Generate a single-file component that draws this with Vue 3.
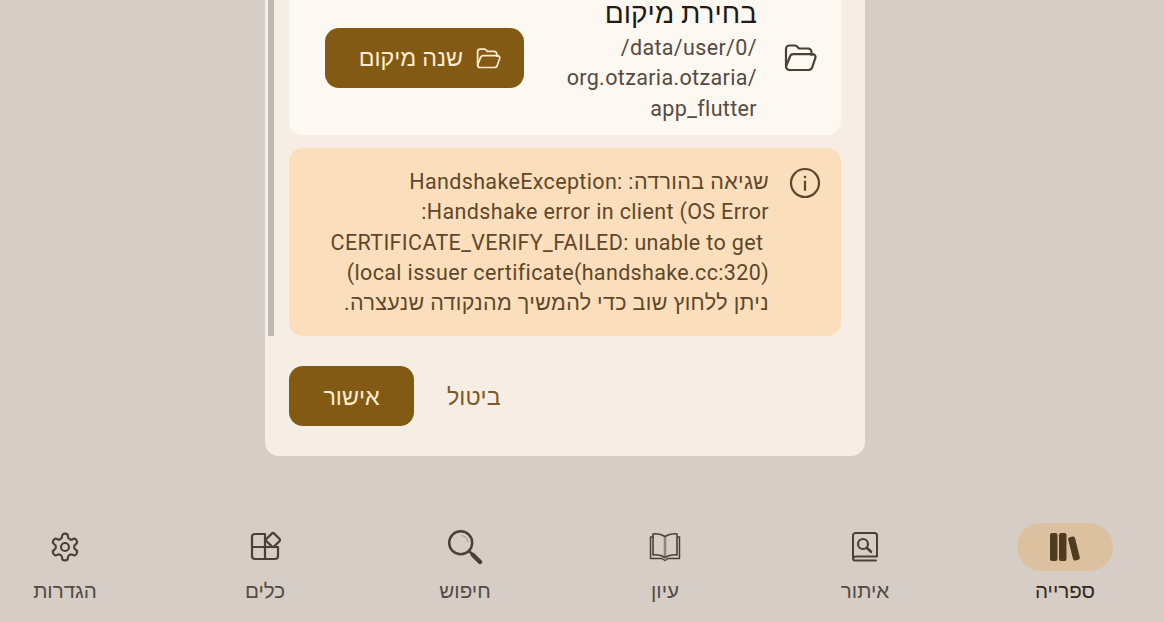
<script setup>
const navItems = [
  { label: 'ספרייה', icon: 'library', active: true },
  { label: 'איתור', icon: 'find' },
  { label: 'עיון', icon: 'book' },
  { label: 'חיפוש', icon: 'search' },
  { label: 'כלים', icon: 'tools' },
  { label: 'הגדרות', icon: 'settings' },
];
const errorText = 'שגיאה בהורדה: HandshakeException: Handshake error in client (OS Error:\n CERTIFICATE_VERIFY_FAILED: unable to get local issuer certificate(handshake.cc:320))\nניתן ללחוץ שוב כדי להמשיך מהנקודה שנעצרה.';
const pathLines = ['/data/user/0/', 'org.otzaria.otzaria/', 'app_flutter'];
</script>

<template>
  <div class="page" dir="rtl">
    <main class="main">
      <section class="dialog">
        <div class="scrollbar"></div>
        <div class="location-card">
          <svg class="folder-icon" width="33" height="28" viewBox="0 0 33 28" fill="none" stroke="currentColor" stroke-width="2.2" stroke-linejoin="round" stroke-linecap="round">
            <path d="M2 22V5a3.5 3.5 0 0 1 3.500-3.500h5.300a3 3 0 0 1 2 .8l2.200 2.200H24a3.500 3.500 0 0 1 3.500 3.500v3" />
            <path d="M2 22.500 6 12.500a3.500 3.500 0 0 1 3.200-2.400H28.500a3 3 0 0 1 2.800 4L28.300 23a4 4 0 0 1-3.800 3H5.500A3.500 3.500 0 0 1 2 22.500z" />
          </svg>
          <div class="location-text">
            <h3 class="location-title">בחירת מיקום</h3>
            <div v-for="line in pathLines" :key="line" class="location-path" dir="ltr">{{ line }}</div>
          </div>
          <button class="primary-btn change-btn">
            <svg width="25" height="21" viewBox="0 0 33 28" fill="none" stroke="currentColor" stroke-width="2.300" stroke-linejoin="round" stroke-linecap="round">
              <path d="M2 22V5a3.5 3.5 0 0 1 3.500-3.500h5.300a3 3 0 0 1 2 .8l2.200 2.200H24a3.500 3.500 0 0 1 3.500 3.500v3" />
              <path d="M2 22.500 6 12.500a3.500 3.500 0 0 1 3.200-2.400H28.500a3 3 0 0 1 2.800 4L28.300 23a4 4 0 0 1-3.800 3H5.500A3.500 3.500 0 0 1 2 22.500z" />
            </svg>
            <span>שנה מיקום</span>
          </button>
        </div>
        <div class="error-box">
          <svg class="info-icon" width="32" height="32" viewBox="0 0 32 32" fill="none" stroke="currentColor" stroke-width="2.200" stroke-linecap="round">
            <circle cx="16" cy="16" r="14" />
            <path d="M16 14.500v8.500" />
            <circle cx="16" cy="10" r="1.300" fill="currentColor" stroke="none" />
          </svg>
          <p class="error-text">{{ errorText }}</p>
        </div>
        <div class="actions">
          <button class="text-btn">ביטול</button>
          <button class="primary-btn ok-btn">אישור</button>
        </div>
      </section>
    </main>
    <nav class="nav">
      <div v-for="item in navItems" :key="item.label" :class="['nav-item', { active: item.active }]">
        <div class="nav-pill">
          <svg v-if="item.icon === 'library'" width="34" height="30" viewBox="0 0 34 30" fill="currentColor">
            <rect x="2" y="1" width="7.500" height="28" rx="2" />
            <rect x="11" y="1" width="7.500" height="28" rx="2" />
            <rect x="22.500" y="4.500" width="7" height="24" rx="2" transform="rotate(-14 26 16.500)" />
          </svg>
          <svg v-else-if="item.icon === 'find'" width="30" height="32" viewBox="0 0 30 32" fill="none" stroke="currentColor" stroke-width="2" stroke-linecap="round" stroke-linejoin="round">
            <path d="M3 26V4.500A2.500 2.500 0 0 1 5.500 2H24.500A2.500 2.500 0 0 1 27 4.500V25.500H6.500A3.500 2 0 0 0 3 27.500 2 2 0 0 0 5 29.500H26" />
            <circle cx="13" cy="13" r="5" stroke-width="2.200" />
            <path d="m17 17 4 3.800" stroke-width="2.600" />
          </svg>
          <svg v-else-if="item.icon === 'book'" width="32" height="30" viewBox="0 0 32 30" fill="none" stroke="currentColor" stroke-width="1.600" stroke-linejoin="round">
            <path d="M16 4.500C13 2.500 8 1.500 4 2V23C8 22.500 13 23.500 16 25.500 19 23.500 24 22.500 28 23V2C24 1.500 19 2.500 16 4.500z" />
            <path d="M16 4.500V25.500" stroke-width="2.600" opacity=".5" />
            <path d="M4 5H1.500V26.500H13L16 28.500 19 26.500H30.500V5H28" stroke-width="1.500" />
          </svg>
          <svg v-else-if="item.icon === 'search'" width="36" height="36" viewBox="0 0 36 36" fill="none" stroke="currentColor" stroke-linecap="round">
            <circle cx="13.700" cy="13.700" r="11.500" stroke-width="2.500" />
            <path d="M15 6.500a7.500 7.500 0 0 1 6 6" stroke-width="1" opacity=".4" />
            <path d="m22.500 22.500 3.500 3.500" stroke-width="2.500" />
            <path d="m26 26 7 7" stroke-width="4.500" />
          </svg>
          <svg v-else-if="item.icon === 'tools'" width="32" height="32" viewBox="0 0 32 32" fill="none" stroke="currentColor" stroke-width="2.200" stroke-linejoin="round">
            <path d="M3 16V6A3 3 0 0 1 6 3H16V16z" />
            <path d="M3 16H29V25A3 3 0 0 1 26 28H6A3 3 0 0 1 3 25z" />
            <path d="M16 16V28" />
            <path d="M25.200 2.600 30.400 7.800a1.700 1.700 0 0 1 0 2.400L25.200 15.400a1.700 1.700 0 0 1-2.400 0L17.600 10.200a1.700 1.700 0 0 1 0-2.400L22.800 2.600a1.700 1.700 0 0 1 2.400 0z" />
          </svg>
          <svg v-else width="32" height="32" viewBox="0 0 24 24" fill="none" stroke="currentColor" stroke-width="1.600" stroke-linecap="round" stroke-linejoin="round">
            <path d="M12.220 2h-.44a2 2 0 0 0-2 2v.18a2 2 0 0 1-1 1.730l-.43.25a2 2 0 0 1-2 0l-.15-.08a2 2 0 0 0-2.730.73l-.22.38a2 2 0 0 0 .73 2.730l.15.1a2 2 0 0 1 1 1.720v.51a2 2 0 0 1-1 1.740l-.15.09a2 2 0 0 0-.73 2.730l.22.38a2 2 0 0 0 2.730.73l.15-.08a2 2 0 0 1 2 0l.43.25a2 2 0 0 1 1 1.730V20a2 2 0 0 0 2 2h.44a2 2 0 0 0 2-2v-.18a2 2 0 0 1 1-1.730l.43-.25a2 2 0 0 1 2 0l.15.08a2 2 0 0 0 2.730-.73l.22-.39a2 2 0 0 0-.73-2.730l-.15-.08a2 2 0 0 1-1-1.740v-.5a2 2 0 0 1 1-1.740l.15-.09a2 2 0 0 0 .73-2.730l-.22-.38a2 2 0 0 0-2.730-.73l-.15.08a2 2 0 0 1-2 0l-.43-.25a2 2 0 0 1-1-1.730V4a2 2 0 0 0-2-2z" />
            <circle cx="12" cy="12" r="3" />
          </svg>
        </div>
        <span class="nav-label">{{ item.label }}</span>
      </div>
    </nav>
  </div>
</template>

<style>
html, body {
  margin: 0;
  background: #d6cdc7;
}
</style>

<style scoped>
.page {
  width: 1164px;
  height: 622px;
  overflow: hidden;
  display: flex;
  flex-direction: column;
  align-items: flex-end;
  background: #d6cdc7;
  font-family: Roboto, "Noto Sans", sans-serif;
}
.main {
  height: 523px;
  width: 1130px;
  flex: none;
  display: flex;
  flex-direction: column;
  justify-content: flex-end;
  align-items: center;
  padding-bottom: 67px;
  box-sizing: border-box;
  overflow: hidden;
}
.dialog {
  position: relative;
  flex: none;
  width: 600px;
  box-sizing: border-box;
  padding: 0 24px 30px;
  background: #f6eee4;
  border-radius: 0 0 14px 14px;
  display: flex;
  flex-direction: column;
}
.scrollbar {
  position: absolute;
  left: 3px;
  top: 0;
  bottom: 120px;
  width: 6px;
  background: #bdbab6;
}
.location-card {
  display: flex;
  align-items: center;
  background: #fef8f3;
  border-radius: 0 0 14px 14px;
  padding: 0 24px 11px 36px;
}
.folder-icon {
  flex: none;
  color: #4a4136;
  margin-left: 27px;
}
.location-text {
  flex: 1;
  min-width: 0;
  padding-top: 4px;
}
.location-title {
  margin: 0 0 1px;
  font-size: 28px;
  line-height: 36px;
  font-weight: 400;
  color: #1f1b16;
}
.location-path {
  font-size: 21.500px;
  letter-spacing: 0.350px;
  line-height: 30.300px;
  color: #544b42;
  text-align: right;
}
.primary-btn {
  border: none;
  background: #825a14;
  color: #fdeccf;
  font-family: inherit;
  font-size: 23.300px;
  border-radius: 14px;
  height: 60px;
  display: flex;
  align-items: center;
  justify-content: center;
  flex: none;
}
.change-btn {
  width: 199px;
  gap: 13px;
  justify-content: flex-start;
  padding: 0 23px 0 0;
}
.error-box {
  margin-top: 13px;
  height: 188px;
  box-sizing: border-box;
  background: #fbdfbd;
  border-radius: 14px;
  display: flex;
  align-items: flex-start;
  padding: 19px 20px 0 16px;
  color: #614729;
}
.info-icon {
  flex: none;
  margin-left: 20px;
}
.error-text {
  margin: 0;
  flex: 1;
  min-width: 0;
  white-space: pre-wrap;
  font-size: 21.500px;
  letter-spacing: 0.350px;
  line-height: 30.300px;
}
.actions {
  margin-top: 30px;
  display: flex;
  justify-content: flex-end;
  gap: 9px;
}
.text-btn {
  border: none;
  background: none;
  color: #7d5a25;
  font-family: inherit;
  font-size: 23.300px;
  padding: 2px 24px 0;
}
.ok-btn {
  width: 125px;
  padding-top: 2px;
}
.nav {
  flex: none;
  width: 1130px;
  height: 99px;
  display: flex;
  justify-content: space-between;
}
.nav-item {
  width: 130px;
  display: flex;
  flex-direction: column;
  align-items: center;
  color: #4a4136;
}
.nav-pill {
  width: 96px;
  height: 48px;
  border-radius: 24px;
  display: flex;
  align-items: center;
  justify-content: center;
}
.nav-item.active .nav-pill {
  background: #dcc1a0;
  color: #4f3b1f;
}
.nav-label {
  margin-top: 8px;
  font-size: 20.600px;
  line-height: 24px;
  color: #544b43;
}
.nav-item.active .nav-label {
  color: #33291f;
}
</style>
